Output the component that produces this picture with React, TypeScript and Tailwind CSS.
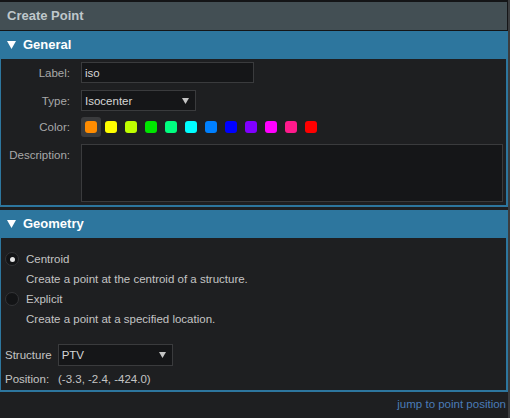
import { useState } from "react";

const SWATCHES = [
  "#ff8c00",
  "#ffff00",
  "#bfff00",
  "#00e600",
  "#00ff80",
  "#00ffff",
  "#0080ff",
  "#0000ff",
  "#8000ff",
  "#ff00ff",
  "#ff1a8c",
  "#ff0000",
];

function Caret({ className = "" }: { className?: string }) {
  return (
    <svg width="9" height="8" viewBox="0 0 9 8" className={className}>
      <polygon points="0,0 9,0 4.5,8" fill="currentColor" />
    </svg>
  );
}

function SectionHeader({ title }: { title: string }) {
  return (
    <div className="flex h-[28px] items-center gap-[7px] bg-[#2d769e] pl-[7px] text-[13px] font-bold text-white">
      <Caret />
      <span>{title}</span>
    </div>
  );
}

function Select({ value, width, height }: { value: string; width: string; height: string }) {
  return (
    <div
      className={`flex items-center justify-between border border-[#3a3b3d] bg-[#151618] pl-[3px] pr-[6px] text-[#d6d6d6] ${width} ${height}`}
    >
      <span>{value}</span>
      <svg width="7" height="6" viewBox="0 0 7 6">
        <polygon points="0,0 7,0 3.5,6" fill="#c4c4c4" />
      </svg>
    </div>
  );
}

function Radio({ checked }: { checked: boolean }) {
  return (
    <span className="flex size-[14px] shrink-0 items-center justify-center rounded-full border border-[#333437] bg-[#131416]">
      {checked && <span className="size-[5px] rounded-full bg-[#e6e6e6]" />}
    </span>
  );
}

export default function App() {
  const [color, setColor] = useState(0);
  const [mode, setMode] = useState<"centroid" | "explicit">("centroid");

  return (
    <div className="flex h-[418px] w-[510px] bg-[#1e1f21] font-['Liberation_Sans',Arial,sans-serif] text-[11.5px] leading-[14px] text-[#c4c4c4]">
      <div className="flex w-[508px] flex-col">
        <div className="flex h-[31px] items-center border-t-2 border-r border-b border-[#141517] bg-[#434f54] pl-[7px] text-[13px] font-bold text-[#bfc7cb]">
          Create Point
        </div>

        <SectionHeader title="General" />
        <div className="flex flex-col gap-[6px] border-l border-r-2 border-b-2 border-[#2d769e] pt-[3px] pb-[3px]">
          <div className="flex items-center">
            <span className="w-[70px] shrink-0 pr-px text-right text-[#a9a9a9]">Label:</span>
            <input
              defaultValue="iso"
              className="ml-[10px] h-[21px] w-[173px] border border-[#3a3b3d] bg-[#151618] px-[3px] text-[#d6d6d6] outline-none"
            />
          </div>
          <div className="flex items-center pt-px">
            <span className="w-[70px] shrink-0 pr-px text-right text-[#a9a9a9]">Type:</span>
            <div className="ml-[10px]">
              <Select value="Isocenter" width="w-[115px]" height="h-[21px]" />
            </div>
          </div>
          <div className="flex items-center">
            <span className="w-[70px] shrink-0 pr-px text-right text-[#a9a9a9]">Color:</span>
            <div className="ml-[10px] flex">
              {SWATCHES.map((c, i) => (
                <button
                  key={c}
                  type="button"
                  onClick={() => setColor(i)}
                  className={`flex size-[20px] items-center justify-center rounded-[3px] ${
                    color === i ? "bg-[#3a3b3d]" : ""
                  }`}
                >
                  <span className="size-[12px] rounded-[3px]" style={{ background: c }} />
                </button>
              ))}
            </div>
          </div>
          <div className="flex items-start pt-px">
            <span className="w-[70px] shrink-0 pt-[4px] pr-px text-right text-[#a9a9a9]">Description:</span>
            <textarea className="ml-[10px] h-[58px] w-[422px] resize-none border border-[#3a3b3d] bg-[#151618] px-[3px] text-[#d6d6d6] outline-none" />
          </div>
        </div>

        <div className="h-[3px]" />

        <SectionHeader title="Geometry" />
        <div className="flex flex-col border-l border-r-2 border-b-2 border-[#2d769e] pt-[11px] pb-[4px] pl-[4px]">
          <button
            type="button"
            onClick={() => setMode("centroid")}
            className="flex h-[20px] items-center gap-[7px] text-left"
          >
            <Radio checked={mode === "centroid"} />
            <span>Centroid</span>
          </button>
          <div className="flex h-[20px] items-center pl-[21px]">Create a point at the centroid of a structure.</div>
          <button
            type="button"
            onClick={() => setMode("explicit")}
            className="flex h-[20px] items-center gap-[7px] text-left"
          >
            <Radio checked={mode === "explicit"} />
            <span>Explicit</span>
          </button>
          <div className="flex h-[20px] items-center pl-[21px]">Create a point at a specified location.</div>

          <div className="mt-[15px] flex items-center gap-[6px]">
            <span>Structure</span>
            <Select value="PTV" width="w-[115px]" height="h-[22px]" />
          </div>
          <div className="mt-[6px] flex h-[14px] items-center">
            <span className="w-[53px]">Position:</span>
            <span>(-3.3, -2.4, -424.0)</span>
          </div>
        </div>

        <div className="flex h-[23px] items-center justify-end pr-[2px]">
          <a href="#" className="text-[#4a7cb8]">
            jump to point position
          </a>
        </div>
      </div>
      <div className="w-[2px] bg-[#3c3d3f]" />
    </div>
  );
}
